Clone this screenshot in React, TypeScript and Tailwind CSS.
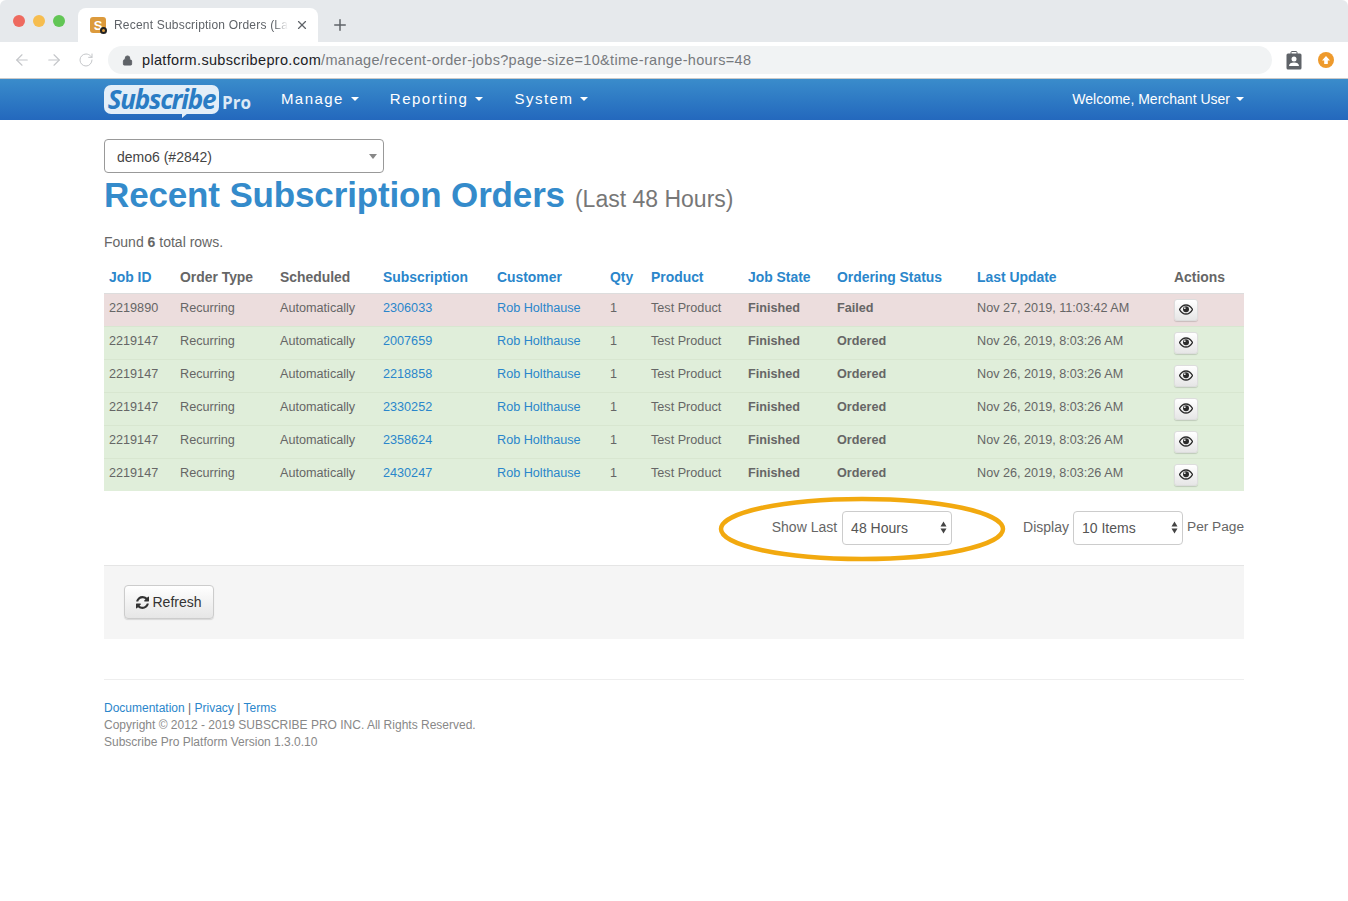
import React from 'react';
import { ArrowLeft, ArrowRight, RotateCw, Lock, X, Plus } from 'lucide-react';

const columns = [
  { label: 'Job ID', width: 'w-[71px]', link: true },
  { label: 'Order Type', width: 'w-[100px]', link: false },
  { label: 'Scheduled', width: 'w-[103px]', link: false },
  { label: 'Subscription', width: 'w-[114px]', link: true },
  { label: 'Customer', width: 'w-[113px]', link: true },
  { label: 'Qty', width: 'w-[41px]', link: true },
  { label: 'Product', width: 'w-[97px]', link: true },
  { label: 'Job State', width: 'w-[89px]', link: true },
  { label: 'Ordering Status', width: 'w-[140px]', link: true },
  { label: 'Last Update', width: 'w-[197px]', link: true },
  { label: 'Actions', width: 'w-[75px]', link: false },
];

const rows = [
  { id: '2219890', sub: '2306033', status: 'Failed', date: 'Nov 27, 2019, 11:03:42 AM', failed: true },
  { id: '2219147', sub: '2007659', status: 'Ordered', date: 'Nov 26, 2019, 8:03:26 AM', failed: false },
  { id: '2219147', sub: '2218858', status: 'Ordered', date: 'Nov 26, 2019, 8:03:26 AM', failed: false },
  { id: '2219147', sub: '2330252', status: 'Ordered', date: 'Nov 26, 2019, 8:03:26 AM', failed: false },
  { id: '2219147', sub: '2358624', status: 'Ordered', date: 'Nov 26, 2019, 8:03:26 AM', failed: false },
  { id: '2219147', sub: '2430247', status: 'Ordered', date: 'Nov 26, 2019, 8:03:26 AM', failed: false },
];

const Caret = () => (
  <span className="ml-[7px] inline-block h-0 w-0 translate-y-[-1px] border-x-4 border-t-4 border-x-transparent border-t-white align-middle" />
);

const EyeIcon = () => (
  <svg width="14" height="11" viewBox="0 0 14 11">
    <path d="M0.5 5.5C2.2 2.4 4.4 1 7 1s4.8 1.4 6.5 4.5C11.8 8.6 9.6 10 7 10S2.2 8.6 0.5 5.5z" fill="none" stroke="#2b2b2b" strokeWidth="1.3" />
    <circle cx="7" cy="5.2" r="3" fill="#2b2b2b" />
    <circle cx="5.8" cy="4.2" r="0.9" fill="#e8e8e8" />
  </svg>
);

const UpDown = () => (
  <svg width="7" height="13" viewBox="0 0 7 13">
    <path d="M3.5 0.5L6.5 5.5H0.5z" fill="#444" />
    <path d="M3.5 12.5L0.5 7.5H6.5z" fill="#444" />
  </svg>
);

const RefreshIcon = () => (
  <svg width="13" height="13" viewBox="0 0 1536 1536">
    <path
      fill="#333"
      d="M1511 928q0 5-1 7-64 268-268 434.5T764 1536q-146 0-282.5-55T238 1324l-129 129q-19 19-45 19t-45-19-19-45V960q0-26 19-45t45-19h448q26 0 45 19t19 45-19 45l-137 137q71 66 161 102t187 36q134 0 250-65t186-179q11-17 53-117 8-23 30-23h192q13 0 22.500 9.500t9.500 22.500zm25-800v448q0 26-19 45t-45 19h-448q-26 0-45-19t-19-45 19-45l138-138Q969 256 768 256q-134 0-250 65T332 500q-11 17-53 117-8 23-30 23H50q-13 0-22.500-9.500T18 608v-7q65-268 270-434.500T768 0q146 0 284 55.500T1297 212l130-129q19-19 45-19t45 19 19 45z"
    />
  </svg>
);

const SelectBox = ({ label, width }: { label: string; width: string }) => (
  <div className={`flex h-[34px] items-center justify-between rounded-[4px] border border-[#ccc] bg-white pl-2 pr-[4px] text-[14px] text-[#555] ${width}`}>
    <span className="pt-[2px]">{label}</span>
    <UpDown />
  </div>
);

export default function App() {
  const cell = (failed: boolean) =>
    `border-t p-0 pb-[3px] pl-[5px] ${failed ? 'border-t-[#ddd]' : 'border-t-[#d8e6d0]'}`;

  return (
    <div className="relative h-[901px] w-[1348px] overflow-hidden rounded-t-[6px] bg-white font-['Liberation_Sans',Arial,sans-serif] text-[14px] text-[#666]">
      {/* Browser tab strip */}
      <div className="flex h-[42px] items-end bg-[#e6e9ec] pl-[13px]">
        <div className="flex h-[34px] items-center gap-[8px] self-center pb-[1px]">
          <span className="h-3 w-3 rounded-full bg-[#ee6a5f]" />
          <span className="h-3 w-3 rounded-full bg-[#f6bd4f]" />
          <span className="h-3 w-3 rounded-full bg-[#62c655]" />
        </div>
        <div className="ml-[13px] flex h-[34px] w-[240px] items-center rounded-t-[8px] bg-white pl-[12px] pr-[9px]">
          <span className="relative flex h-4 w-4 items-center justify-center rounded-[3px] bg-[#dc9a3c] text-[13px] font-bold leading-none text-white">
            S
            <span className="absolute -bottom-[1px] -right-[1px] h-[7px] w-[7px] rounded-full border-2 border-[#222] bg-[#dc9a3c]" />
          </span>
          <span className="ml-[8px] whitespace-nowrap text-[12px] tracking-[0.2px] text-[#5f6368] [mask-image:linear-gradient(to_right,black_92%,transparent)]">
            Recent Subscription Orders (La
          </span>
          <X size={14} strokeWidth={2} className="ml-auto text-[#5f6368]" />
        </div>
        <Plus size={18} strokeWidth={2} className="mb-[8px] ml-[13px] text-[#5f6368]" />
      </div>

      {/* Browser toolbar */}
      <div className="flex h-[37px] items-center border-b border-[#c9c9c9] bg-white pl-[13px] pr-[12px]">
        <ArrowLeft size={18} strokeWidth={1.5} className="text-[#c4c6c9]" />
        <ArrowRight size={18} strokeWidth={1.5} className="ml-[14px] text-[#c4c6c9]" />
        <RotateCw size={16} strokeWidth={1.5} className="ml-[15px] text-[#c4c6c9]" />
        <div className="ml-[14px] flex h-[28px] w-[1164px] items-center rounded-full bg-[#f1f3f4] pl-[14px]">
          <Lock size={11} fill="#5f6368" strokeWidth={2} className="text-[#5f6368]" />
          <span className="ml-[9px] pt-[1px] text-[14.5px] tracking-[0.33px] text-[#202124]">
            platform.subscribepro.com
            <span className="text-[#777a7e]">/manage/recent-order-jobs?page-size=10&amp;time-range-hours=48</span>
          </span>
        </div>
        <svg width="16" height="19" viewBox="0 0 16 19" className="ml-[14px]">
          <rect x="0.5" y="2.500" width="15" height="16" rx="1.500" fill="#5f6368" />
          <rect x="5" y="0.500" width="6" height="4" rx="1" fill="none" stroke="#5f6368" />
          <circle cx="8" cy="8" r="2.500" fill="#fff" />
          <path d="M3 15c0-2.500 2.200-3.500 5-3.500s5 1 5 3.500z" fill="#fff" />
        </svg>
        <span className="ml-[16px] flex h-4 w-4 items-center justify-center rounded-full bg-[#ee9a2c]">
          <svg width="10" height="10" viewBox="0 0 10 10">
            <path d="M5 1L9 5.500H6.800V9H3.200V5.500H1z" fill="#fff" />
          </svg>
        </span>
      </div>

      {/* App navbar */}
      <div className="flex h-[41px] items-center bg-gradient-to-b from-[#3a8ccb] to-[#2468bd] pl-[104px] pr-[104px] text-white">
        <div className="flex items-end">
          <span className="relative flex h-[29px] w-[115px] items-center justify-center rounded-[7px] bg-[#e3eef8] pb-[2px] font-['Open_Sans',Arial,sans-serif] text-[26px] font-bold italic leading-none tracking-[-1.2px] text-[#2a7cc4]">
            Subscribe
            <span className="absolute -bottom-[4px] left-[78px] h-0 w-0 border-r-[6px] border-t-[5px] border-r-transparent border-t-[#e3eef8]" />
          </span>
          <span className="ml-[3px] font-['Open_Sans',Arial,sans-serif] text-[17px] font-bold leading-[22px] text-[#dce9f6]">Pro</span>
        </div>
        <span className="ml-[30px] text-[15px] tracking-[1.45px]">Manage<Caret /></span>
        <span className="ml-[31px] text-[15px] tracking-[1.5px]">Reporting<Caret /></span>
        <span className="ml-[31px] text-[15px] tracking-[1.5px]">System<Caret /></span>
        <span className="ml-auto pl-[1px] text-[14px]">Welcome, Merchant User<span className="ml-[-1px]"><Caret /></span></span>
      </div>

      {/* Page content */}
      <div className="px-[104px] pt-[19px]">
        <div className="flex h-[34px] w-[280px] items-center justify-between rounded-[4px] border border-[#999] bg-white pl-[12px] pr-[6px] text-[14px] text-[#444]">
          <span className="pt-[2px]">demo6 (#2842)</span>
          <span className="h-0 w-0 border-x-4 border-t-[5px] border-x-transparent border-t-[#888]" />
        </div>
        <div className="mt-[1px] flex items-baseline">
          <h1 className="text-[35px] font-bold leading-[42px] tracking-[-0.15px] text-[#348bcb]">Recent Subscription Orders</h1>
          <span className="ml-[10px] text-[23px] text-[#777]">(Last 48 Hours)</span>
        </div>
        <p className="mt-[15px] leading-[20px] text-[#666]">
          Found <b>6</b> total rows.
        </p>

        <table className="mt-[10px] w-[1140px] table-fixed border-separate border-spacing-0">
          <thead>
            <tr className="h-[31px]">
              {columns.map((col) => (
                <th
                  key={col.label}
                  className={`${col.width} p-0 pl-[5px] text-left text-[13.9px] font-bold ${col.link ? 'text-[#2a86cb]' : 'text-[#666]'}`}
                >
                  {col.label}
                </th>
              ))}
            </tr>
          </thead>
          <tbody className="text-[12.65px]">
            {rows.map((row, idx) => (
              <tr key={idx} className={`h-[33px] ${row.failed ? 'bg-[#ecdddd]' : 'bg-[#e0eeda]'}`}>
                <td className={cell(row.failed)}>{row.id}</td>
                <td className={cell(row.failed)}>Recurring</td>
                <td className={cell(row.failed)}>Automatically</td>
                <td className={`${cell(row.failed)} text-[#2a86cb]`}>{row.sub}</td>
                <td className={`${cell(row.failed)} text-[#2a86cb]`}>Rob Holthause</td>
                <td className={cell(row.failed)}>1</td>
                <td className={cell(row.failed)}>Test Product</td>
                <td className={`${cell(row.failed)} font-bold`}>Finished</td>
                <td className={`${cell(row.failed)} font-bold`}>{row.status}</td>
                <td className={cell(row.failed)}>{row.date}</td>
                <td className={`${cell(row.failed)} !pb-0`}>
                  <span className="flex h-[22px] w-[24px] items-center justify-center rounded-[3px] border border-[#ddd] bg-gradient-to-b from-white to-[#e6e6e6] shadow-[0_1px_1px_rgba(0,0,0,0.15)]">
                    <EyeIcon />
                  </span>
                </td>
              </tr>
            ))}
          </tbody>
        </table>

        <div className="mt-[20px] flex h-[34px] items-center justify-end">
          <span className="pb-[1px]">Show Last</span>
          <div className="ml-[5px]">
            <SelectBox label="48 Hours" width="w-[110px]" />
          </div>
          <span className="ml-[70px] pb-[1px] pl-[1px]">Display</span>
          <div className="ml-[4px]">
            <SelectBox label="10 Items" width="w-[110px]" />
          </div>
          <span className="ml-[4px] w-[57px] whitespace-nowrap pb-[1px] text-[13.7px]">Per Page</span>
        </div>

        <div className="mt-[20px] flex h-[74px] items-center border-t border-[#e5e5e5] bg-[#f5f5f5] pl-[20px]">
          <button className="flex h-[34px] w-[90px] items-center justify-center gap-[3px] rounded-[4px] border border-[#ccc] bg-gradient-to-b from-white to-[#e6e6e6] text-[14px] text-[#333] shadow-[0_1px_1px_rgba(0,0,0,0.12)]">
            <RefreshIcon />
            Refresh
          </button>
        </div>

        <div className="mt-[40px] border-t border-[#eee] pt-[20px] text-[12px] leading-[17px] text-[#888]">
          <div>
            <span className="text-[#2a86cb]">Documentation</span> <span className="text-[#666]">|</span>{' '}
            <span className="text-[#2a86cb]">Privacy</span> <span className="text-[#666]">|</span>{' '}
            <span className="text-[#2a86cb]">Terms</span>
          </div>
          <div>Copyright © 2012 - 2019 SUBSCRIBE PRO INC. All Rights Reserved.</div>
          <div>Subscribe Pro Platform Version 1.3.0.10</div>
        </div>
      </div>

      {/* Hand-drawn highlight over the time range select */}
      <svg width="290" height="68" viewBox="0 0 290 68" className="pointer-events-none absolute left-[717px] top-[495px]">
        <ellipse cx="145" cy="34" rx="141" ry="30" fill="none" stroke="#f2a90f" strokeWidth="4.500" />
      </svg>
    </div>
  );
}
